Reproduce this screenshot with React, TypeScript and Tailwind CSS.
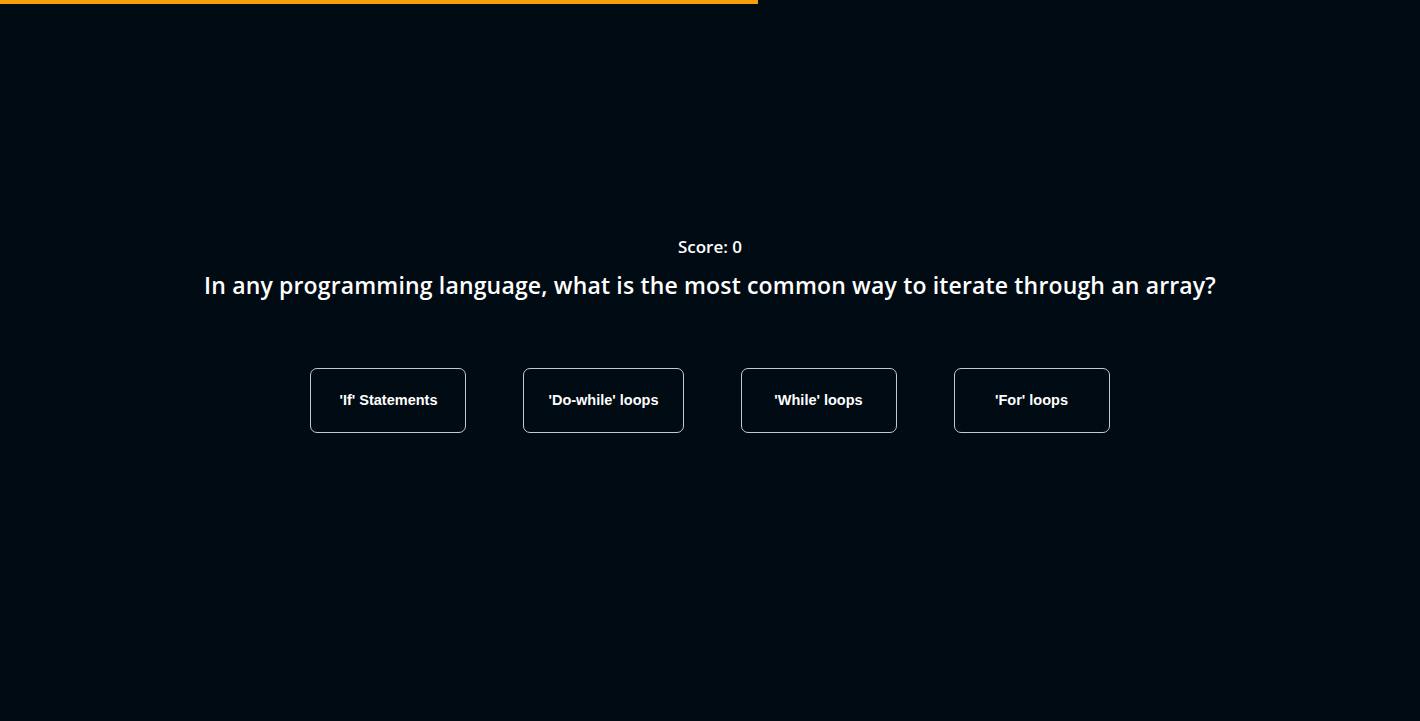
import React from "react";

const options = ["'If' Statements", "'Do-while' loops", "'While' loops", "'For' loops"];

export default function App() {
  return (
    <div className="min-h-[721px] w-full bg-[#010b13] text-white">
      <div className="h-[4px] w-[53.4%] bg-[#f5a00b]" />
      <div className="flex flex-col items-center pt-[231px]">
        <div className="text-[17px] font-semibold leading-[24px] [font-family:'Open_Sans',sans-serif]">Score: 0</div>
        <h1 className="mt-[10px] text-[23px] font-semibold leading-[32px] tracking-[0.16px] [font-family:'Open_Sans',sans-serif]">
          In any programming language, what is the most common way to iterate through an array?
        </h1>
        <div className="mt-[67px] flex gap-[57px]">
          {options.map((o) => (
            <button
              key={o}
              className="h-[65px] min-w-[156px] rounded-[7px] border border-[#c8c8c8] px-[24px] text-[14.5px] font-bold text-white [font-family:'Liberation_Sans',Arial,sans-serif]"
            >
              {o}
            </button>
          ))}
        </div>
      </div>
    </div>
  );
}
